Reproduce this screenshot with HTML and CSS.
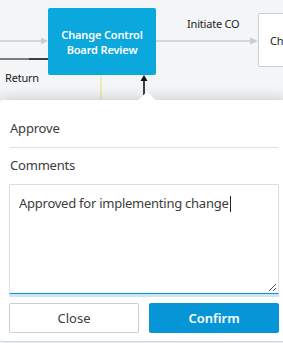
FILE: index.html
```html
<!DOCTYPE html>
<html lang="en">
<head>
<meta charset="UTF-8">
<meta name="viewport" content="width=device-width, initial-scale=1.0">
<title>Workflow Step</title>
<link rel="stylesheet" href="styles.css">
</head>
<body>
<div class="canvas">
  <!-- edges -->
  <svg class="edges" width="283" height="110" viewBox="0 0 283 110">
    <line x1="0" y1="41" x2="42" y2="41" stroke="#c9ced4" stroke-width="1.5"/>
    <polygon points="41,37.5 48,41 41,44.5" fill="#c9ced4"/>
    <line x1="156" y1="41" x2="251" y2="41" stroke="#c9ced4" stroke-width="1.5"/>
    <polygon points="250,37.5 258,41 250,44.5" fill="#c9ced4"/>
    <line x1="0" y1="59" x2="29" y2="59" stroke="#555" stroke-width="1.5"/>
    <line x1="29" y1="59" x2="48" y2="59" stroke="#000" stroke-width="1.5"/>
    <line x1="101" y1="75" x2="101" y2="104" stroke="#efe38a" stroke-width="1.2"/>
    <line x1="144" y1="80" x2="144" y2="104" stroke="#111" stroke-width="1.6"/>
    <polygon points="140.5,81 144,75 147.5,81" fill="#111"/>
  </svg>

  <div class="node node-active">Change Control<br>Board Review</div>
  <div class="node node-next">Change Order</div>
  <span class="edge-label label-initiate">Initiate CO</span>
  <span class="edge-label label-return">Return</span>

  <!-- popover -->
  <div class="popover">
    <div class="popover-arrow"></div>
    <div class="popover-title">Approve</div>
    <div class="field-label">Comments</div>
    <div class="comment-box">
      <span class="comment-text">Approved for implementing change</span><span class="caret"></span>
      <svg class="grip" width="9" height="9" viewBox="0 0 9 9">
        <line x1="1" y1="8" x2="8" y2="1" stroke="#555" stroke-width="1"/>
        <line x1="5" y1="8" x2="8" y2="5" stroke="#555" stroke-width="1"/>
      </svg>
    </div>
    <div class="actions">
      <button class="btn btn-secondary">Close</button>
      <button class="btn btn-primary">Confirm</button>
    </div>
  </div>
</div>
</body>
</html>
```

FILE: styles.css
```css
html, body {
  margin: 0;
  padding: 0;
  overflow: hidden;
}

body {
  font-family: "Noto Sans", "Open Sans", sans-serif;
  color: #3c3c3c;
  background: #f4f5f7;
}

.canvas {
  position: relative;
  width: 283px;
  height: 343px;
  overflow: hidden;
}

.edges {
  position: absolute;
  left: 0;
  top: 0;
}

/* workflow nodes */
.node {
  position: absolute;
  box-sizing: border-box;
  display: flex;
  align-items: center;
  border-radius: 2px;
  font-size: 11px;
  line-height: 15px;
  letter-spacing: -0.15px;
}

.node-active {
  left: 48px;
  top: 8px;
  width: 108px;
  height: 67px;
  justify-content: center;
  text-align: center;
  background: #0aa8dd;
  color: #fff;
  font-weight: 600;
}

.node-next {
  left: 258px;
  top: 13px;
  width: 108px;
  height: 54px;
  padding-left: 11px;
  white-space: nowrap;
  background: #fff;
  border: 1px solid #c9ced4;
  color: #222;
}

.edge-label {
  position: absolute;
  font-size: 11px;
  line-height: 14px;
  letter-spacing: -0.2px;
  color: #222;
}

.label-initiate {
  left: 187px;
  top: 17px;
}

.label-return {
  left: 5px;
  top: 71px;
}

/* popover */
.popover {
  position: absolute;
  left: 0;
  top: 100px;
  width: 288px;
  height: 242px;
  box-sizing: border-box;
  padding: 0 9px 0 9px;
  background: #fff;
  border-bottom: 1px solid #d6d9dd;
  border-radius: 3px;
  box-shadow: 0 -2px 14px rgba(0, 0, 0, 0.16);
}

.popover-arrow {
  position: absolute;
  left: 141px;
  top: -6px;
  width: 12px;
  height: 12px;
  background: #fff;
  transform: rotate(45deg);
}

.popover-title {
  position: relative;
  margin: 0 1px;
  padding: 20px 0 10px;
  font-size: 13px;
  line-height: 17px;
  letter-spacing: -0.2px;
  border-bottom: 1px solid #e3e3e3;
}

.field-label {
  margin: 9px 1px 0;
  font-size: 13px;
  line-height: 17px;
  letter-spacing: -0.2px;
}

.comment-box {
  position: relative;
  margin-top: 10px;
  height: 110px;
  box-sizing: border-box;
  padding: 9px 9px;
  border: 1px solid #dcdfe2;
  border-bottom: 1px solid #0696d7;
  box-shadow: 0 3px 0 #c9e7f5;
  font-size: 13px;
  line-height: 18px;
  letter-spacing: -0.25px;
}

.caret {
  display: inline-block;
  width: 1px;
  height: 16px;
  margin-left: 1px;
  background: #222;
  vertical-align: -4px;
}

.grip {
  position: absolute;
  right: 1px;
  bottom: 1px;
}

.actions {
  display: flex;
  gap: 10px;
  margin-top: 9px;
}

.btn {
  width: 130px;
  height: 30px;
  box-sizing: border-box;
  border-radius: 2px;
  font-family: inherit;
  font-size: 13px;
  cursor: pointer;
}

.btn-secondary {
  background: #fff;
  border: 1px solid #c9ced4;
  color: #3c3c3c;
}

.btn-primary {
  background: #0696d7;
  border: 1px solid #0696d7;
  color: #fff;
  font-weight: 600;
}
```
